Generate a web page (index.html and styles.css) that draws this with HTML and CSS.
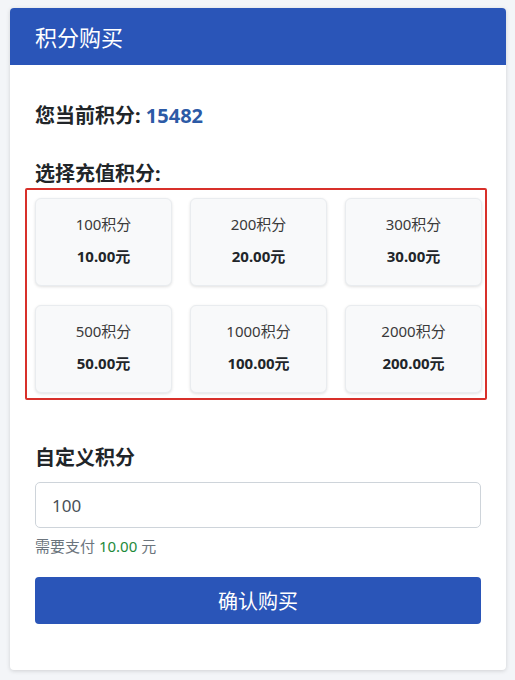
FILE: index.html
```html
<!DOCTYPE html>
<html lang="zh-CN">
<head>
    <meta charset="UTF-8">
    <meta name="viewport" content="width=device-width, initial-scale=1.0">
    <title>积分购买</title>
    <link rel="stylesheet" href="styles.css">
</head>
<body>

    <div class="card">
        <div class="card-header">
            <h1>积分购买</h1>
        </div>

        <div class="card-body">
            <div class="balance">您当前积分: <span class="balance-num">15482</span></div>

            <div class="section-title">选择充值积分:</div>
            <div class="option-wrap">
                <div class="option-grid">
                    <div class="option">
                        <div class="points">100积分</div>
                        <div class="price">10.00元</div>
                    </div>
                    <div class="option">
                        <div class="points">200积分</div>
                        <div class="price">20.00元</div>
                    </div>
                    <div class="option">
                        <div class="points">300积分</div>
                        <div class="price">30.00元</div>
                    </div>
                    <div class="option">
                        <div class="points">500积分</div>
                        <div class="price">50.00元</div>
                    </div>
                    <div class="option">
                        <div class="points">1000积分</div>
                        <div class="price">100.00元</div>
                    </div>
                    <div class="option">
                        <div class="points">2000积分</div>
                        <div class="price">200.00元</div>
                    </div>
                </div>
            </div>

            <label class="custom-label" for="customPoints">自定义积分</label>
            <input type="text" id="customPoints" class="custom-input" value="100">
            <div class="pay-hint">需要支付 <span class="pay-amount">10.00</span> 元</div>

            <button class="submit-btn">确认购买</button>
        </div>
    </div>

</body>
</html>
```

FILE: styles.css
```css
body {
    font-family: "Noto Sans", "Noto Sans CJK SC", sans-serif;
    background-color: #f3f5f8;
    margin: 0;
    padding: 8px 9px 10px 10px;
    color: #212529;
}

.card {
    background-color: white;
    border-radius: 4px;
    box-shadow: 0 1px 4px rgba(0, 0, 0, 0.15);
    overflow: hidden;
}

.card-header {
    background-color: #2a55b8;
    height: 57px;
    padding: 0 25px;
    display: flex;
    align-items: center;
}

.card-header h1 {
    margin: 0;
    color: white;
    font-size: 22px;
    font-weight: normal;
    line-height: 30px;
}

.card-body {
    padding: 36px 25px 46px 25px;
}

.balance {
    font-size: 20px;
    font-weight: bold;
    line-height: 30px;
}

.balance-num {
    color: #2c5aa6;
}

.section-title {
    font-size: 20px;
    font-weight: bold;
    line-height: 30px;
    margin-top: 28px;
}

.option-wrap {
    position: relative;
    margin-top: 9px;
}

.option-wrap::after {
    content: "";
    position: absolute;
    top: -10px;
    left: -10px;
    right: -6px;
    bottom: -7px;
    border: 2px solid #d8302a;
    border-radius: 2px;
    pointer-events: none;
}

.option-grid {
    display: grid;
    grid-template-columns: repeat(3, 1fr);
    column-gap: 18px;
    row-gap: 19px;
    margin-right: -1px;
}

.option {
    background-color: #f8f9fa;
    border: 1px solid #e9ecef;
    border-radius: 6px;
    box-shadow: 0 1px 3px rgba(0, 0, 0, 0.12);
    height: 88px;
    box-sizing: border-box;
    padding-top: 15px;
    text-align: center;
}

.points {
    font-size: 15px;
    line-height: 21px;
    color: #3a3a3a;
}

.price {
    font-size: 15px;
    line-height: 21px;
    font-weight: bold;
    margin-top: 11px;
}

.custom-label {
    display: block;
    font-size: 20px;
    font-weight: bold;
    line-height: 30px;
    margin-top: 50px;
}

.custom-input {
    display: block;
    width: 100%;
    height: 46px;
    margin-top: 9px;
    box-sizing: border-box;
    border: 1px solid #ced4da;
    border-radius: 5px;
    padding: 0 16px;
    font-family: inherit;
    font-size: 17px;
    color: #495057;
}

.pay-hint {
    font-size: 15px;
    line-height: 21px;
    color: #6c757d;
    margin-top: 8px;
}

.pay-amount {
    color: #1e8a3a;
}

.submit-btn {
    display: block;
    width: 100%;
    height: 47px;
    margin-top: 20px;
    background-color: #2a55b8;
    border: none;
    border-radius: 4px;
    color: white;
    font-family: inherit;
    font-size: 20px;
    cursor: pointer;
}
```
